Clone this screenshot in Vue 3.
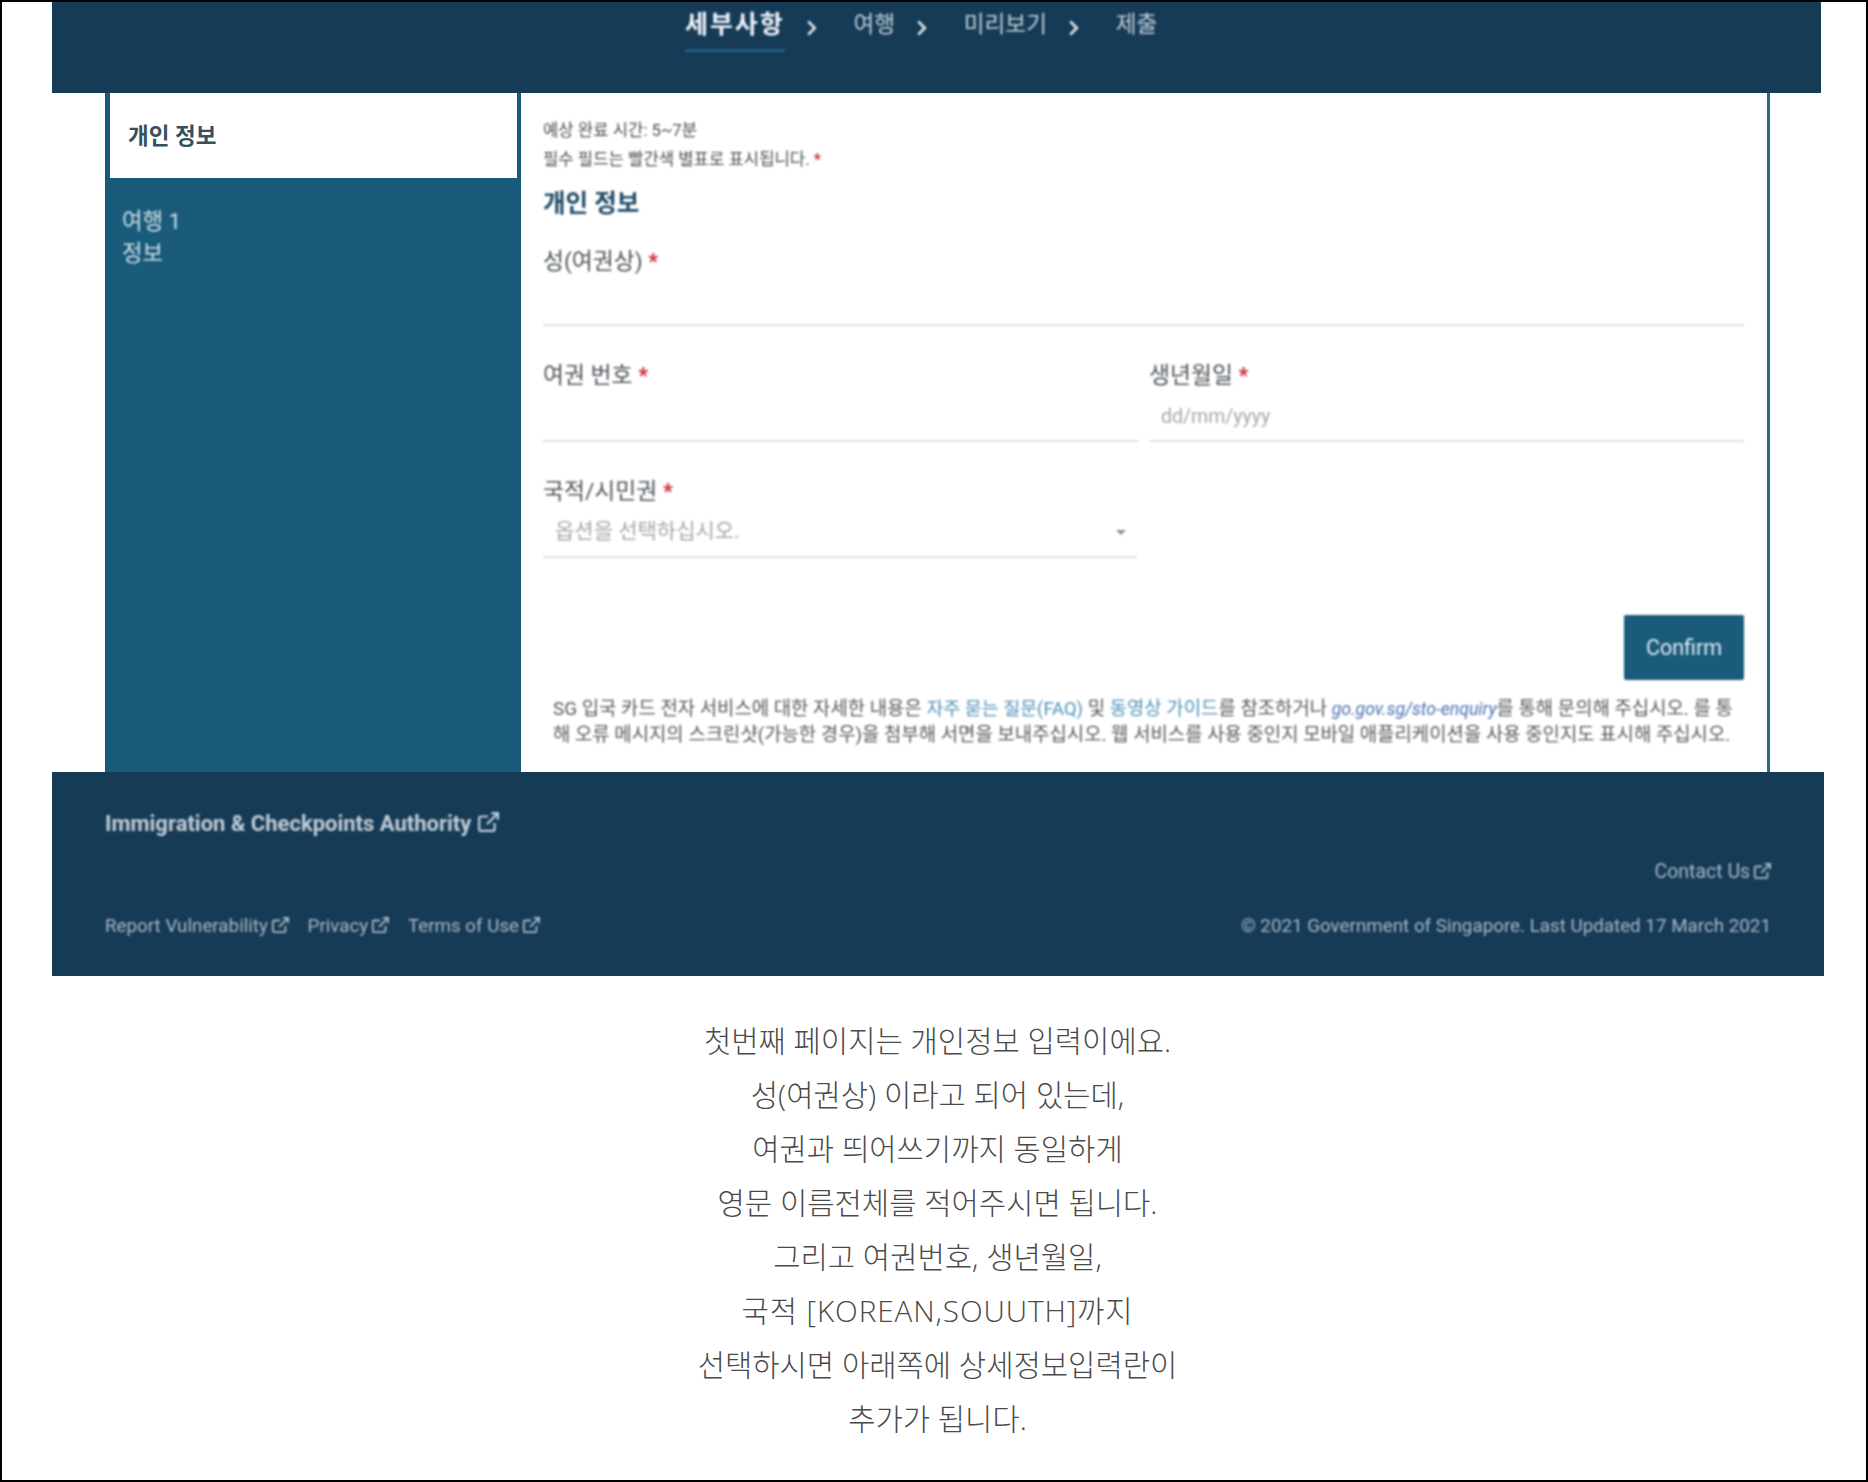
<template>
  <div class="page">
    <div class="shot">
      <header class="topbar">
        <nav class="steps">
          <template v-for="(step, i) in steps" :key="step">
            <span class="step" :class="{ 'step--active': i === 0 }">{{ step }}</span>
            <svg v-if="i < steps.length - 1" class="chevron" viewBox="0 0 10 16" aria-hidden="true">
              <path d="M2 2l6 6-6 6" />
            </svg>
          </template>
        </nav>
      </header>

      <div class="body">
        <aside class="side">
          <div class="side__active">개인 정보</div>
          <div class="side__item">여행 1<br />정보</div>
        </aside>

        <main class="form">
          <p class="hint">예상 완료 시간: 5~7분</p>
          <p class="hint">필수 필드는 빨간색 별표로 표시됩니다. <i>*</i></p>
          <h2 class="form__title">개인 정보</h2>

          <div class="field field--first">
            <label>성(여권상) <i>*</i></label>
            <div class="input input--first"></div>
          </div>

          <div class="row">
            <div class="field">
              <label>여권 번호 <i>*</i></label>
              <div class="input"></div>
            </div>
            <div class="field">
              <label>생년월일 <i>*</i></label>
              <div class="input input--muted">dd/mm/yyyy</div>
            </div>
          </div>

          <div class="row row--last">
            <div class="field">
              <label>국적/시민권 <i>*</i></label>
              <div class="input input--muted input--select">
                옵션을 선택하십시오.
                <span class="caret"></span>
              </div>
            </div>
          </div>

          <div class="actions">
            <button class="confirm" type="button">Confirm</button>
          </div>

          <p class="notice">
            SG 입국 카드 전자 서비스에 대한 자세한 내용은 <a>자주 묻는 질문(FAQ)</a> 및 <a>동영상 가이드</a>를 참조하거나
            <em>go.gov.sg/sto-enquiry</em>를 통해 문의해 주십시오. 를 통<br />
            해 오류 메시지의 스크린샷(가능한 경우)을 첨부해 서면을 보내주십시오. 웹 서비스를 사용 중인지 모바일 애플리케이션을 사용 중인지도 표시해 주십시오.
          </p>
        </main>
      </div>

      <footer class="foot">
        <div class="foot__brand">
          Immigration &amp; Checkpoints Authority
          <svg class="ext ext--big" viewBox="0 0 20 20" aria-hidden="true">
            <path d="M16 11v5.5a1.5 1.5 0 0 1-1.5 1.5h-11A1.5 1.5 0 0 1 2 16.500v-10A1.500 1.500 0 0 1 3.500 5H10" />
            <path d="M13 2h6v6M19 2L9 12" />
          </svg>
        </div>
        <div class="foot__contact">
          Contact Us
          <svg class="ext" viewBox="0 0 20 20" aria-hidden="true">
            <path d="M16 11v5.5a1.5 1.5 0 0 1-1.5 1.5h-11A1.5 1.5 0 0 1 2 16.500v-10A1.500 1.500 0 0 1 3.500 5H10" />
            <path d="M13 2h6v6M19 2L9 12" />
          </svg>
        </div>
        <div class="foot__bottom">
          <div class="foot__links">
            <span v-for="link in footLinks" :key="link">
              {{ link }}
              <svg class="ext" viewBox="0 0 20 20" aria-hidden="true">
                <path d="M16 11v5.5a1.5 1.5 0 0 1-1.5 1.5h-11A1.5 1.5 0 0 1 2 16.500v-10A1.500 1.500 0 0 1 3.500 5H10" />
                <path d="M13 2h6v6M19 2L9 12" />
              </svg>
            </span>
          </div>
          <div class="foot__copy">© 2021 Government of Singapore. Last Updated 17 March 2021</div>
        </div>
      </footer>
    </div>

    <section class="caption">
      <p
        v-for="line in captionLines"
        :key="line"
        :class="{ 'caption__latin': line.includes('KOREAN') }"
      >{{ line }}</p>
    </section>
  </div>
</template>

<script setup>
const steps = ['세부사항', '여행', '미리보기', '제출'];
const footLinks = ['Report Vulnerability', 'Privacy', 'Terms of Use'];
const captionLines = [
  '첫번째 페이지는 개인정보 입력이에요.',
  '성(여권상) 이라고 되어 있는데,',
  '여권과 띄어쓰기까지 동일하게',
  '영문 이름전체를 적어주시면 됩니다.',
  '그리고 여권번호, 생년월일,',
  '국적 [KOREAN,SOUUTH]까지',
  '선택하시면 아래쪽에 상세정보입력란이',
  '추가가 됩니다.',
];
</script>

<style>
body {
  background: #fff;
}
</style>

<style scoped>
.page {
  box-sizing: border-box;
  width: 1868px;
  height: 1482px;
  border: 2px solid #000;
  background: #fff;
  overflow: hidden;
  font-family: Roboto, "Noto Sans CJK KR", sans-serif;
}
.shot {
  width: 1772px;
  margin-left: 50px;
}
/* the source is a soft, upscaled screenshot: blur the content, keep the block edges crisp */
.steps,
.side__item,
.form > *,
.foot > * {
  filter: blur(0.8px);
}
.topbar {
  height: 91px;
  width: 1769px;
  background: #163b57;
  box-sizing: border-box;
}
.steps {
  display: flex;
  align-items: flex-start;
  padding-left: 633px;
  height: 60px;
}
.step {
  font-size: 22.600px;
  line-height: 28px;
  padding: 9px 0 6px;
  color: #c3d0da;
}
.step--active {
  font-size: 25px;
  font-weight: 700;
  letter-spacing: 1.900px;
  padding-bottom: 10px;
  color: #f2f6f8;
  border-bottom: 3px solid #1d5f80;
}
.chevron {
  width: 11px;
  height: 18px;
  margin: 17px 36.800px 0 21px;
  flex: none;
}
.chevron path {
  fill: none;
  stroke: #dfe7ec;
  stroke-width: 2.4;
}
.body {
  display: grid;
  grid-template-columns: 416px 1249px;
  margin-left: 53px;
  height: 679px;
  width: 1665px;
}
.side {
  background: #1a5a7b;
}
.side__active {
  margin: 0 4px 0 5px;
  height: 85px;
  box-sizing: border-box;
  padding: 28px 0 0 18px;
  background: #fff;
  color: #35505f;
  font-size: 22.500px;
  line-height: 30px;
  font-weight: 700;
}
.side__item {
  padding: 27px 0 0 17px;
  color: #d3e1e9;
  font-size: 22.300px;
  line-height: 32px;
}
.form {
  box-sizing: border-box;
  padding: 29px 23px 0 22px;
  border-right: 3px solid #2a6a90;
  background: #fff;
  color: #4a4f54;
}
.hint {
  margin: 0 0 11px;
  font-size: 16.700px;
  line-height: 18px;
  color: #4a4f54;
}
i {
  font-style: normal;
  color: #c8283a;
  font-weight: 700;
  font-size: 0.95em;
}
.form__title {
  margin: 18.500px 0 0;
  font-size: 24.500px;
  line-height: 32px;
  font-weight: 700;
  color: #1d4a66;
}
.field {
  min-width: 0;
}
.field--first {
  margin-top: 27px;
}
.field label {
  display: block;
  font-size: 22.800px;
  line-height: 30px;
  color: #4d5358;
}
.input {
  box-sizing: border-box;
  height: 51px;
  padding: 13px 12px 0;
  border-bottom: 2px solid #e0e0e0;
  font-size: 19.500px;
  line-height: 26px;
}
.input--first {
  height: 49.600px;
}
.input--muted {
  color: #a3a7aa;
}
.input--select {
  position: relative;
  width: 594px;
  padding-top: 11px;
  font-size: 21px;
}
.caret {
  position: absolute;
  right: 11px;
  top: 23px;
  border: 5px solid transparent;
  border-top: 5px solid #8a8f93;
  border-bottom: 0;
}
.row {
  display: grid;
  grid-template-columns: 596px 595px;
  gap: 10px;
  margin-top: 35px;
}
.row--last {
  margin-top: 34.600px;
}
.actions {
  display: flex;
  justify-content: flex-end;
  margin-top: 57px;
}
.confirm {
  width: 120px;
  height: 65px;
  border: 0;
  border-radius: 2px;
  background: #1a5a7b;
  color: #e3eef3;
  font: 400 21.500px Roboto, sans-serif;
}
.notice {
  margin: 16px 0 0 10px;
  width: 1190px;
  white-space: nowrap;
  font-size: 18.850px;
  line-height: 26px;
  color: #55595d;
}
.notice a {
  color: #4f92b8;
}
.notice a:first-of-type {
  font-size: 18.400px;
}
.notice em {
  font-size: 17.600px;
  color: #4a6fb0;
}
.foot {
  box-sizing: border-box;
  height: 204px;
  padding: 38px 53px 0 53px;
  background: #163b57;
  color: #a9b8c4;
  font-size: 18.800px;
}
.foot__brand {
  font-size: 22px;
  line-height: 28px;
  font-weight: 700;
  color: #c3ced7;
}
.foot__contact {
  margin-top: 22px;
  text-align: right;
  line-height: 24px;
  font-size: 19.500px;
}
.foot__bottom {
  display: flex;
  justify-content: space-between;
  margin-top: 30px;
  line-height: 24px;
}
.foot__links {
  display: flex;
  gap: 19px;
}
.foot__links .ext,
.foot__contact .ext {
  margin-left: -2px;
}
.ext {
  width: 18px;
  height: 18px;
  vertical-align: -2px;
}
.ext--big {
  width: 22px;
  height: 22px;
}
.ext path {
  fill: none;
  stroke: currentColor;
  stroke-width: 2;
}
.caption {
  margin-top: 37.500px;
  padding-left: 7px;
  text-align: center;
  font-family: "Open Sans", "Noto Sans CJK KR", sans-serif;
  font-weight: 300;
  font-size: 29.700px;
  line-height: 54px;
  color: #4a4a4a;
}
.caption p {
  margin: 0;
}
.caption .caption__latin {
  letter-spacing: 0.900px;
}
</style>
